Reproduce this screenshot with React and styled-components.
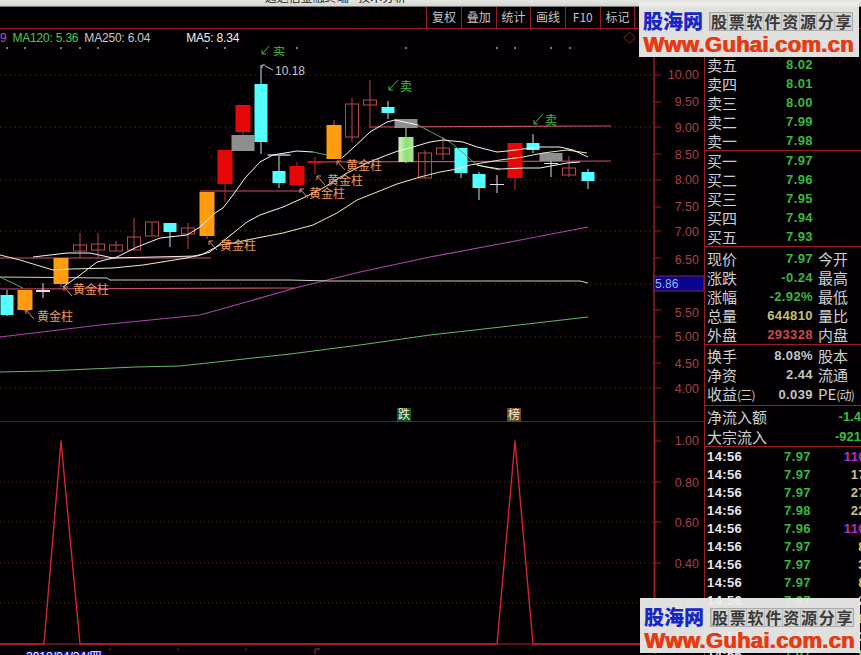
import React from 'react';
import styled, {createGlobalStyle} from 'styled-components';

const CJK = `"Noto Sans CJK SC", "Liberation Sans", sans-serif`;
const NUM = `"Liberation Sans", "Noto Sans CJK SC", sans-serif`;
const RED_LINE = '#9a1c24';

const Global = createGlobalStyle`
  html, body { margin: 0; padding: 0; background: #000; }
`;

const Page = styled.div`
  position: relative;
  width: 861px;
  height: 655px;
  overflow: hidden;
  background: #020003;
  font-family: ${CJK};
  display: flex;
  flex-direction: column;
`;

const TitleStrip = styled.div`
  height: 7px;
  flex: none;
  overflow: hidden;
  background: linear-gradient(#e6e6e2, #d4d4d0);
  border-bottom: 1px solid #777;
  box-sizing: border-box;
  display: flex;
  justify-content: center;
  align-items: flex-end;
  padding-right: 190px;
`;

const TitleText = styled.div`
  font-size: 12px;
  line-height: 13px;
  color: #222;
  white-space: nowrap;
  margin-bottom: 3px;
`;

const Toolbar = styled.div`
  height: 22px;
  flex: none;
  box-sizing: border-box;
  border-bottom: 1px solid ${RED_LINE};
  display: flex;
  justify-content: flex-end;
  padding-right: 192px;
`;

const ToolButton = styled.div`
  width: 34.7px;
  box-sizing: border-box;
  border-left: 1px solid ${RED_LINE};
  color: #c4c4c4;
  font-size: 12px;
  line-height: 20px;
  text-align: center;
  white-space: nowrap;
`;

const Body = styled.div`
  flex: 1;
  min-height: 0;
  display: flex;
`;

const ChartPane = styled.div`
  width: 704px;
  flex: none;
  display: flex;
  flex-direction: column;
`;

const Legend = styled.div`
  height: 17px;
  flex: none;
  display: flex;
  align-items: center;
  font-family: ${NUM};
  font-size: 12px;
  letter-spacing: -0.2px;
  white-space: nowrap;
  overflow: hidden;
`;

const LegendItem = styled.span`
  color: ${p => p.$color};
  margin-left: ${p => p.$gap}px;
`;

const Diamond = styled.span`
  width: 7px;
  height: 7px;
  margin-left: 386px;
  border: 1px solid #6a2016;
  transform: rotate(45deg);
`;

const Drawing = styled.svg`
  display: block;
  flex: none;
`;

const IndicatorPane = styled.div`
  position: relative;
  flex: 1;
  min-height: 0;
  overflow: hidden;
`;

const DateTag = styled.div`
  position: absolute;
  left: 26px;
  top: 229px;
  width: 77px;
  height: 4px;
  overflow: hidden;
  background: #0a0a9a;
  color: #fff;
  font-family: ${NUM};
  font-size: 12px;
  line-height: 13px;
  white-space: nowrap;
`;

const AxisText = styled.text`
  font-family: ${NUM};
  font-size: 12.5px;
  fill: #a44444;
  text-anchor: end;
`;

const NoteText = styled.text`
  font-family: ${p => (p.$num ? NUM : CJK)};
  font-size: 12px;
  fill: ${p => p.$color};
`;

const Trace = styled.polyline`
  fill: none;
  stroke: ${p => p.$color};
  stroke-width: ${p => p.$w || 1};
  stroke-linejoin: round;
`;

const QuotePanel = styled.div`
  flex: 1;
  min-width: 0;
  box-sizing: border-box;
  border-left: 1px solid ${RED_LINE};
  overflow: hidden;
`;

const Section = styled.div`
  box-sizing: border-box;
  border-bottom: 1px solid ${RED_LINE};
  padding-top: ${p => p.$top || 0}px;
  padding-bottom: ${p => p.$bottom || 0}px;
`;

const QuoteRow = styled.div`
  display: grid;
  grid-template-columns: 68px 33px 1fr;
  column-gap: 5px;
  align-items: center;
  height: 19px;
  padding-left: 2px;
`;

const Label = styled.span`
  color: #cfcfcf;
  font-size: 15px;
  line-height: 19px;
  white-space: nowrap;
`;

const Narrow = styled.span`
  font-size: 12px;
  letter-spacing: -0.8px;
`;

const Value = styled.span`
  justify-self: end;
  color: ${p => p.$color};
  font-family: ${NUM};
  font-size: 13px;
  font-weight: bold;
  letter-spacing: 0.4px;
  white-space: nowrap;
`;

const FlowRow = styled.div`
  display: flex;
  justify-content: space-between;
  align-items: center;
  height: 20px;
  padding-left: 2px;
`;

const FlowValue = styled(Value)`
  letter-spacing: 0;
  color: #39c03c;
`;

const TradeRow = styled.div`
  display: grid;
  grid-template-columns: 77px 30px 52px;
  align-items: center;
  height: 18px;
  padding-left: 2px;
  font-family: ${NUM};
  font-size: 13px;
  font-weight: bold;
  letter-spacing: 0.4px;
`;

const TradeTime = styled.span`
  color: #e8e8e8;
`;

const TradePrice = styled.span`
  color: #38b83c;
  white-space: nowrap;
`;

const TradeVolume = styled.span`
  color: ${p => p.$color};
  justify-self: end;
`;

const Watermark = styled.div`
  position: absolute;
  left: ${p => p.$left}px;
  top: ${p => p.$top}px;
  width: 220px;
  height: 55px;
  box-sizing: border-box;
  padding: 7px 4px 0 4px;
  background: rgba(236, 236, 234, 0.95);
`;

const WatermarkTop = styled.div`
  display: flex;
  align-items: center;
  justify-content: space-between;
  height: 24px;
`;

const SiteName = styled.span`
  color: #1726c8;
  font-size: 20px;
  font-weight: 900;
  line-height: 24px;
  white-space: nowrap;
`;

const SloganCells = styled.div`
  display: flex;
  border: 1px solid #aaa;
  margin-right: 2px;
`;

const SloganCell = styled.span`
  width: 17.8px;
  height: 17px;
  box-sizing: border-box;
  border-left: 1px solid #bbb;
  background: #d4d4d2;
  color: #3a3a3a;
  font-size: 16px;
  font-weight: 700;
  line-height: 17px;
  text-align: center;
`;

const SiteUrl = styled.div`
  color: #e83a12;
  font-family: "Liberation Sans", sans-serif;
  font-size: 22px;
  font-weight: bold;
  line-height: 23px;
  letter-spacing: 0.3px;
  white-space: nowrap;
  text-shadow: 1px 0 0 #e83a12;
`;

// x, wickTop, wickBottom, bodyTop, bodyBottom, kind
const CANDLES = [
  [7, 290, 316, 295, 315, 'cyan'],
  [25, 290, 312, 290, 310, 'orange'],
  [43, 283, 298, 290, 292, 'cross'],
  [61, 258, 287, 258, 284, 'orange'],
  [80, 233, 258, 245, 251, 'hollow'],
  [98, 233, 258, 244, 250, 'hollow'],
  [116, 241, 251, 245, 251, 'hollow'],
  [134, 218, 250, 237, 250, 'hollow'],
  [152, 222, 236, 222, 236, 'hollow'],
  [170, 223, 247, 223, 232, 'cyan'],
  [188, 223, 249, 228, 234, 'hollow'],
  [207, 192, 239, 192, 236, 'orange'],
  [225, 150, 202, 150, 184, 'red'],
  [243, 105, 135, 105, 132, 'red'],
  [243, 135, 151, 135, 151, 'grey'],
  [261, 65, 154, 84, 142, 'cyan'],
  [279, 155, 188, 171, 183, 'cyan'],
  [279, 154, 156, 154, 156, 'grey'],
  [297, 162, 185, 166, 185, 'red'],
  [315, 157, 174, 161, 163, 'red'],
  [334, 120, 159, 125, 159, 'orange'],
  [352, 98, 142, 104, 137, 'hollow'],
  [370, 80, 128, 100, 105, 'hollow'],
  [388, 101, 119, 107, 113, 'cyan'],
  [406, 119, 128, 119, 128, 'grey'],
  [406, 128, 163, 137, 162, 'green'],
  [425, 150, 178, 153, 178, 'hollow'],
  [443, 137, 160, 148, 154, 'hollow'],
  [461, 148, 178, 148, 173, 'cyan'],
  [479, 172, 200, 174, 188, 'cyan'],
  [497, 175, 193, 184, 185, 'cross'],
  [515, 143, 190, 143, 178, 'red'],
  [533, 134, 153, 143, 150, 'cyan'],
  [551, 153, 161, 153, 161, 'grey'],
  [551, 161, 177, 163, 164, 'cross'],
  [569, 156, 177, 168, 175, 'hollow'],
  [588, 169, 189, 172, 181, 'cyan'],
];

const KINDS = {
  cyan: {fill: '#55ffff', wick: '#a8eeee', half: 6.5},
  orange: {fill: '#ff9c12', wick: '#c05a30', half: 7.5},
  red: {fill: '#e60808', wick: '#c82828', half: 7.5},
  hollow: {fill: 'none', wick: '#b84a4a', half: 6.5, stroke: '#b84a4a'},
  grey: {fill: '#8e8e8e', wick: '#8e8e8e', half: 11.5},
  green: {fill: 'url(#greenBody)', wick: '#b8e8b8', half: 7.5},
  cross: {fill: '#eadcec', wick: '#e0e0e0', half: 7},
};

const PRICE_TICKS = [
  ['10.00', 75, 79], ['9.50', 102, 106], ['9.00', 127, 132], ['8.50', 154, 159],
  ['8.00', 180, 184], ['7.50', 207, 211], ['7.00', 231, 236], ['6.50', 258, 264],
  ['5.50', 310, 317], ['5.00', 337, 341], ['4.50', 363, 368], ['4.00', 388, 393],
];
const PRICE_GRID = [75, 127, 180, 231, 284, 337, 388];

const LEVEL_LINES = [
  [370, 127, 611, 126],
  [308, 162, 611, 161],
  [200, 191, 302, 191],
  [0, 258, 211, 258],
  [0, 289, 295, 288],
];

const GOLD_NOTES = [
  [37, 321, 26, 310],
  [73, 294, 64, 287],
  [220, 250, 209, 241],
  [309, 198, 300, 189],
  [327, 185, 317, 176],
  [346, 170, 337, 161],
];

const FAST = '63,287 80,275 97,262 117,257 137,247 160,238 187,235 200,227 215,213 223,208 233,195 245,178 260,162 273,155 297,151 313,152';
const FAST_MID = '342,158 353,148 370,132 387,122 395,120 418,125';
const FAST_TAIL = '477,165 487,167 500,169 523,168 540,168 567,163 580,162';
const GREEN_BEND = '313,152 327,155';
const GREEN_DROP = '418,125 450,142 477,165 500,170';
const GREEN_HEAD = '0,277 23,288';
const MEDIUM = '33,257 67,253 90,253 113,258 197,256 210,252 227,238 247,222 260,215 283,207 303,198 323,188 347,173 367,163 387,155 398,151 413,147 430,142 443,140 463,142 477,147 497,152 507,151 540,147 560,147 573,150 588,157';
const SLOW = '0,255 20,260 43,267 53,270 70,269 113,268 143,265 187,258 203,254 220,245 233,243 257,238 283,233 313,225 337,213 357,200 377,192 397,184 420,177 440,172 457,169 470,165 500,160 523,157 543,153 567,150 587,153';
const MA60 = '0,277 107,278 110,280 290,280 330,281 420,281 490,281 580,281 588,283';
const MA120 = '0,372 45,371 90,369 135,367 180,366 235,360 290,354 360,345 430,335 510,326 588,317';
const MA250 = '0,337 50,331 100,325 150,320 200,315 250,301 295,288 360,272 430,257 510,242 588,227';

const TOOLS = ['复权', '叠加', '统计', '画线', 'F10', '标记', ''];
const ASKS = [['卖五', '8.02'], ['卖四', '8.01'], ['卖三', '8.00'], ['卖二', '7.99'], ['卖一', '7.98']];
const BIDS = [['买一', '7.97'], ['买二', '7.96'], ['买三', '7.95'], ['买四', '7.94'], ['买五', '7.93']];
const GREEN = '#3cb83e';
const QUOTES = [
  ['现价', '7.97', '今开', GREEN],
  ['涨跌', '-0.24', '最高', GREEN],
  ['涨幅', '-2.92%', '最低', GREEN],
  ['总量', '644810', '量比', '#c8c078'],
  ['外盘', '293328', '内盘', '#d04848'],
];
const TRADES = [
  ['7.97', '110', '#b430c8'], ['7.97', '17', '#c4c48c'], ['7.97', '27', '#c4c48c'],
  ['7.98', '22', '#c4c48c'], ['7.96', '110', '#b430c8'], ['7.97', '8', '#d8c850'],
  ['7.97', '3', '#d8d8a0'], ['7.97', '8', '#d8c850'], ['7.97', '2', '#d8d8a0'],
  ['7.97', '8', '#d8c850'], ['7.97', '3', '#d8d8a0'], ['7.97', '8', '#d8c850'],
];
const SLOGAN = '股票软件资源分享'.split('');

const Candle = ({x, wickTop, wickBottom, bodyTop, bodyBottom, kind}) => {
  const k = KINDS[kind];
  return (
    <g>
      <line x1={x} x2={x} y1={wickTop} y2={wickBottom} stroke={k.wick} strokeWidth="1" />
      <rect
        x={x - k.half}
        y={bodyTop}
        width={k.half * 2}
        height={bodyBottom - bodyTop}
        fill={k.fill}
        stroke={k.stroke || 'none'}
      />
    </g>
  );
};

const SellNote = ({x, y}) => (
  <g>
    <path d={`M${x + 10} ${y - 7} L${x + 1} ${y + 3} M${x + 1} ${y - 1} V${y + 3} H${x + 5}`} fill="none" stroke="#3cc23c" />
    <NoteText x={x + 12} y={y + 4} $color="#3cc23c">卖</NoteText>
  </g>
);

const PriceChart = () => (
  <Drawing width="704" height="376" viewBox="0 46 704 376">
    <defs>
      <linearGradient id="greenBody" x1="0" y1="0" x2="1" y2="0">
        <stop offset="0" stopColor="#d4f4c0" />
        <stop offset="0.5" stopColor="#8ee070" />
        <stop offset="1" stopColor="#a8e890" />
      </linearGradient>
    </defs>
    {PRICE_GRID.map(y => (
      <line key={y} x1="0" x2="654" y1={y} y2={y} stroke="#6e2c28" strokeDasharray="1 4" />
    ))}
    {[7, 25, 61, 80, 98, 207, 225, 297, 406, 497, 515, 551, 570].map(x => (
      <rect key={x} x={x - 1} y="47" width="2" height="2" fill="#9a5aa8" />
    ))}
    <Trace points={MA250} $color="#a848a8" $w="1.2" />
    <Trace points={MA120} $color="#68b868" />
    <Trace points={MA60} $color="#cfcfc4" />
    {LEVEL_LINES.map(([x1, y1, x2, y2]) => (
      <line key={x1} x1={x1} x2={x2} y1={y1} y2={y2} stroke="#c8506e" strokeWidth="1.2" />
    ))}
    {CANDLES.map(([x, wickTop, wickBottom, bodyTop, bodyBottom, kind]) => (
      <Candle key={`${x}-${kind}`} x={x} wickTop={wickTop} wickBottom={wickBottom} bodyTop={bodyTop} bodyBottom={bodyBottom} kind={kind} />
    ))}
    <Trace points={GREEN_HEAD} $color="#5aa85a" />
    <Trace points={GREEN_BEND} $color="#5aa85a" />
    <Trace points={GREEN_DROP} $color="#5aa85a" />
    <Trace points={SLOW} $color="#f0ecc0" />
    <Trace points={MEDIUM} $color="#f4f4f4" />
    <Trace points={FAST} $color="#f8f8f8" />
    <Trace points={FAST_MID} $color="#f8f8f8" />
    <Trace points={FAST_TAIL} $color="#f8f8f8" />
    {GOLD_NOTES.map(([x, y, ax, ay]) => (
      <g key={x}>
        <path d={`M${ax} ${ay} L${ax + 8} ${ay + 9} M${ax} ${ay + 4} V${ay} H${ax + 4}`} fill="none" stroke="#e89058" />
        <NoteText x={x} y={y} $color="#f09a58">黄金柱</NoteText>
      </g>
    ))}
    <path d="M262 68 V65 H265 M265 66 L273 70" fill="none" stroke="#cccccc" />
    <NoteText x="275" y="75" $num $color="#c8c8c8">10.18</NoteText>
    <SellNote x={388} y={87} />
    <SellNote x={533} y={121} />
    <SellNote x={261} y={51} />
    <rect x="397" y="408" width="14" height="14" fill="#0e5a1c" />
    <NoteText x="398" y="419" $color="#f0f0f0">跌</NoteText>
    <rect x="507" y="408" width="14" height="14" fill="#6a4a2a" />
    <NoteText x="508" y="419" $color="#f6f0d0">榜</NoteText>
    <line x1="654" x2="654" y1="46" y2="422" stroke={RED_LINE} strokeWidth="1.5" />
    {PRICE_TICKS.map(([label, y, base]) => (
      <g key={label}>
        <line x1="654" x2="661" y1={y} y2={y} stroke={RED_LINE} />
        <AxisText x="699" y={base}>{label}</AxisText>
      </g>
    ))}
    <rect x="654" y="276" width="50" height="15" fill="#06068e" stroke="#8a2434" />
    <NoteText x="655" y="288" $num $color="#9cb4f0">5.86</NoteText>
    <line x1="0" x2="704" y1="422" y2="422" stroke={RED_LINE} strokeWidth="1.5" />
  </Drawing>
);

const IndicatorChart = () => (
  <Drawing width="704" height="232" viewBox="0 423 704 232">
    {[483, 523, 564, 604].map(y => (
      <line key={y} x1="0" x2="654" y1={y} y2={y} stroke="#5e2622" strokeDasharray="1 3" />
    ))}
    <Trace points="0,645 44,645 61,442 80,645 497,645 515,442 533,645 654,645" $color="#d4262c" $w="1.4" />
    <line x1="0" x2="704" y1="645" y2="645" stroke="#a8242c" strokeWidth="1.2" />
    <line x1="654.5" x2="654.5" y1="423" y2="655" stroke="#a01c20" strokeWidth="2" />
    {[['1.00', 442, 446], ['0.80', 483, 488], ['0.60', 523, 528], ['0.40', 564, 569], ['0.20', 604, 609]].map(([label, y, base]) => (
      <g key={label}>
        <line x1="654" x2="661" y1={y} y2={y} stroke={RED_LINE} />
        <AxisText x="699" y={base}>{label}</AxisText>
      </g>
    ))}
    {[110, 178, 246].map(x => (
      <line key={x} x1={x} x2={x} y1="649" y2="652" stroke="#6e3030" />
    ))}
    <path d="M315 655 V650 H320" fill="none" stroke="#c83030" />
  </Drawing>
);

const SiteBadge = ({left, top}) => (
  <Watermark $left={left} $top={top}>
    <WatermarkTop>
      <SiteName>股海网</SiteName>
      <SloganCells>
        {SLOGAN.map(c => <SloganCell key={c}>{c}</SloganCell>)}
      </SloganCells>
    </WatermarkTop>
    <SiteUrl>Www.Guhai.com.cn</SiteUrl>
  </Watermark>
);

const App = () => {
  return (
    <Page>
      <Global />
      <TitleStrip><TitleText>通达信金融终端 - 技术分析</TitleText></TitleStrip>
      <Toolbar>
        {TOOLS.map(t => <ToolButton key={t}>{t}</ToolButton>)}
      </Toolbar>
      <Body>
        <ChartPane>
          <Legend>
            <LegendItem $color="#b050c0" $gap={0}>9</LegendItem>
            <LegendItem $color="#48c850" $gap={6}>MA120: 5.36</LegendItem>
            <LegendItem $color="#c8c8c8" $gap={6}>MA250: 6.04</LegendItem>
            <LegendItem $color="#f0f0f0" $gap={36}>MA5: 8.34</LegendItem>
            <Diamond />
          </Legend>
          <PriceChart />
          <IndicatorPane>
            <IndicatorChart />
            <DateTag>2018/04/24/四</DateTag>
          </IndicatorPane>
        </ChartPane>
        <QuotePanel>
          <Section $top={26}>
            {ASKS.map(([label, price]) => (
              <QuoteRow key={label}><Label>{label}</Label><Value $color={GREEN}>{price}</Value></QuoteRow>
            ))}
          </Section>
          <Section>
            {BIDS.map(([label, price]) => (
              <QuoteRow key={label}><Label>{label}</Label><Value $color={GREEN}>{price}</Value></QuoteRow>
            ))}
          </Section>
          <Section $top={2}>
            {QUOTES.map(([label, value, other, color]) => (
              <QuoteRow key={label}><Label>{label}</Label><Value $color={color}>{value}</Value><Label>{other}</Label></QuoteRow>
            ))}
          </Section>
          <Section $top={1} $bottom={2}>
            <QuoteRow><Label>换手</Label><Value $color="#c4c4c4">8.08%</Value><Label>股本</Label></QuoteRow>
            <QuoteRow><Label>净资</Label><Value $color="#c4c4c4">2.44</Value><Label>流通</Label></QuoteRow>
            <QuoteRow>
              <Label>收益<Narrow>(三)</Narrow></Label>
              <Value $color="#c4c4c4">0.039</Value>
              <Label>PE<Narrow>(动)</Narrow></Label>
            </QuoteRow>
          </Section>
          <Section>
            <FlowRow><Label>净流入额</Label><FlowValue>-1.4</FlowValue></FlowRow>
            <FlowRow><Label>大宗流入</Label><FlowValue>-921</FlowValue></FlowRow>
          </Section>
          {TRADES.map(([price, volume, color], i) => (
            <TradeRow key={i}>
              <TradeTime>14:56</TradeTime>
              <TradePrice>{price}</TradePrice>
              <TradeVolume $color={color}>{volume}</TradeVolume>
            </TradeRow>
          ))}
        </QuotePanel>
      </Body>
      <SiteBadge left={639} top={2} />
      <SiteBadge left={640} top={598} />
    </Page>
  );
};

export default App;
